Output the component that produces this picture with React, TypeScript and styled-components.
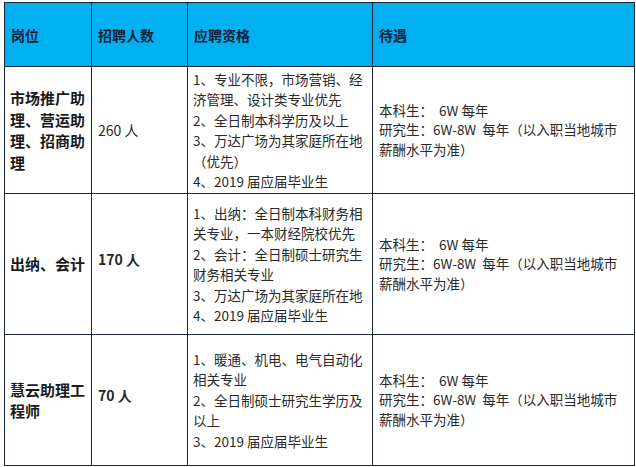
import React from "react";
import styled, { createGlobalStyle } from "styled-components";

const GlobalStyle = createGlobalStyle`
  html, body {
    margin: 0;
    padding: 0;
    background: #ffffff;
  }
  body {
    font-family: "Noto Sans CJK SC", "Noto Sans", sans-serif;
  }
`;

const Page = styled.div`
  padding: 2px 0 0 4px;
`;

const Table = styled.table`
  width: 631px;
  table-layout: fixed;
  border-collapse: separate;
  border-spacing: 0;
  border-top: 1px solid #1c2736;
  border-left: 1px solid #1c2736;
`;

const HeadCell = styled.th<{ $width: number }>`
  box-sizing: border-box;
  width: ${(p) => p.$width}px;
  height: 64px;
  padding: 0 6px;
  background: #00b0f0;
  border-right: 1px solid #1c2736;
  border-bottom: 1px solid #1c2736;
  color: #0e2139;
  font-size: 14px;
  font-weight: 700;
  text-align: left;
  vertical-align: middle;
`;

const Row = styled.tr<{ $height: number }>`
  height: ${(p) => p.$height}px;
`;

const Cell = styled.td`
  box-sizing: border-box;
  padding: 0 5px 0 6px;
  border-right: 1px solid #1c2736;
  border-bottom: 1px solid #1c2736;
  vertical-align: middle;
  color: #262626;
  white-space: nowrap;
`;

const PostCell = styled(Cell)`
  padding-left: 5px;
  font-size: 15px;
  font-weight: 700;
  line-height: 21.5px;
  color: #1a1a1a;
`;

const CountCell = styled(Cell)<{ $bold: boolean }>`
  font-size: 14px;
  font-weight: ${(p) => (p.$bold ? 700 : 400)};
  padding-bottom: ${(p) => (p.$bold ? 10 : 0)}px;
`;

const ReqCell = styled(Cell)`
  padding-left: 5px;
  font-size: 13.5px;
  line-height: 20.5px;
  color: #2a2a2a;
`;

const PayCell = styled(Cell)`
  font-size: 13.5px;
  line-height: 19.5px;
  color: #2a2a2a;
`;

const Line = styled.div`
  white-space: pre;
`;

const pay = [
  "本科生：  6W 每年",
  "研究生：6W-8W  每年（以入职当地城市",
  "薪酬水平为准）",
];

const rows = [
  {
    post: ["市场推广助", "理、营运助", "理、招商助", "理"],
    count: "260 人",
    bold: false,
    height: 127,
    reqs: [
      "1、专业不限，市场营销、经",
      "济管理、设计类专业优先",
      "2、全日制本科学历及以上",
      "3、万达广场为其家庭所在地",
      "（优先）",
      "4、2019 届应届毕业生",
    ],
  },
  {
    post: ["出纳、会计"],
    count: "170 人",
    bold: true,
    height: 141,
    reqs: [
      "1、出纳：全日制本科财务相",
      "关专业，一本财经院校优先",
      "2、会计：全日制硕士研究生",
      "财务相关专业",
      "3、万达广场为其家庭所在地",
      "4、2019 届应届毕业生",
    ],
  },
  {
    post: ["慧云助理工", "程师"],
    count: "70 人",
    bold: true,
    height: 131,
    reqs: [
      "1、暖通、机电、电气自动化",
      "相关专业",
      "2、全日制硕士研究生学历及",
      "以上",
      "3、2019 届应届毕业生",
    ],
  },
];

function App() {
  return (
    <Page>
      <GlobalStyle />
      <Table>
        <thead>
          <tr>
            <HeadCell $width={87}>岗位</HeadCell>
            <HeadCell $width={96}>招聘人数</HeadCell>
            <HeadCell $width={185}>应聘资格</HeadCell>
            <HeadCell $width={262}>待遇</HeadCell>
          </tr>
        </thead>
        <tbody>
          {rows.map((row) => (
            <Row key={row.count} $height={row.height}>
              <PostCell>
                {row.post.map((l) => (
                  <Line key={l}>{l}</Line>
                ))}
              </PostCell>
              <CountCell $bold={row.bold}>{row.count}</CountCell>
              <ReqCell>
                {row.reqs.map((l) => (
                  <Line key={l}>{l}</Line>
                ))}
              </ReqCell>
              <PayCell>
                {pay.map((l) => (
                  <Line key={l}>{l}</Line>
                ))}
              </PayCell>
            </Row>
          ))}
        </tbody>
      </Table>
    </Page>
  );
}

export default App;
